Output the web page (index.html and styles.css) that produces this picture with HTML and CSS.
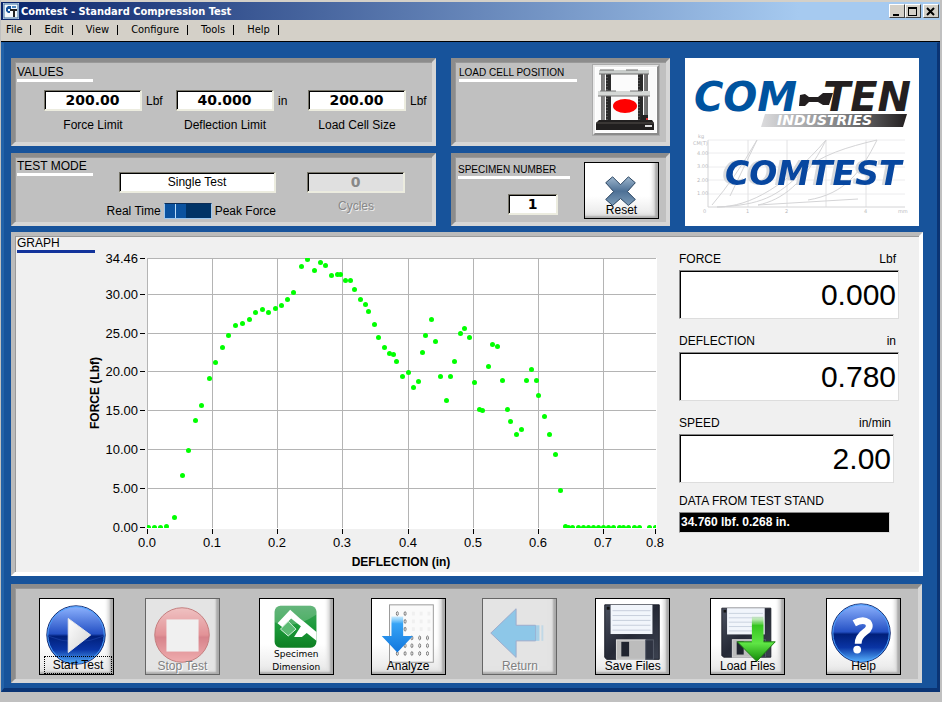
FILE: index.html
```html
<!DOCTYPE html>
<html lang="en">
<head>
  <meta charset="UTF-8">
  <meta name="viewport" content="width=device-width, initial-scale=1.0">
  <title>Comtest - Standard Compression Test</title>
  <link rel="stylesheet" href="styles.css">
</head>
<body>
  <header class="titlebar">
    <svg class="app-icon" width="16" height="16" viewBox="0 0 16 16" aria-hidden="true">
      <rect width="16" height="16" fill="#dfe9f3"/>
      <rect x="1" y="1" width="14" height="14" fill="#f4f8fb" stroke="#3b6ea0"/>
      <path d="M8 3H5L3 5v3l2 2h2V8H5V6h3z" fill="#17539b"/>
      <path d="M7 6h7v2h-2v6h-2V8H7z" fill="#222"/>
      <path d="M9 3h4v2H9z" fill="#4d86bd"/>
    </svg>
    <h1>Comtest - Standard Compression Test</h1>
    <div class="window-buttons">
      <button type="button" aria-label="Minimize"><svg width="12" height="11" viewBox="0 0 12 11"><path d="M2 8h6v2H2z"/></svg></button>
      <button type="button" aria-label="Maximize"><svg width="12" height="11" viewBox="0 0 12 11"><path fill-rule="evenodd" d="M1 1h9v9H1zM2 3v6h7V3z"/></svg></button>
      <button type="button" class="close" aria-label="Close"><svg width="12" height="11" viewBox="0 0 12 11"><path d="M2 2l7 7M9 2l-7 7" fill="none" stroke="#000" stroke-width="2"/></svg></button>
    </div>
  </header>

  <nav class="menubar">
    <a href="#">File</a>
    <a href="#">Edit</a>
    <a href="#">View</a>
    <a href="#">Configure</a>
    <a href="#">Tools</a>
    <a href="#">Help</a>
  </nav>

  <main>
    <div class="top">
      <section class="panel values">
        <h2>VALUES</h2>
        <div class="fields">
          <div class="field">
            <div class="entry"><input class="num" id="force" value="200.00"><span>Lbf</span></div>
            <label for="force">Force Limit</label>
          </div>
          <div class="field">
            <div class="entry"><input class="num" id="deflection" value="40.000"><span>in</span></div>
            <label for="deflection">Deflection Limit</label>
          </div>
          <div class="field">
            <div class="entry"><input class="num" id="cell" value="200.00"><span>Lbf</span></div>
            <label for="cell">Load Cell Size</label>
          </div>
        </div>
      </section>

      <section class="panel loadcell">
        <h2>LOAD CELL POSITION</h2>
        <button type="button" class="picture" aria-label="Load cell position">
          <svg width="60" height="64" viewBox="0 0 60 64">
            <defs>
              <linearGradient id="steel" x2="1" y2="0">
                <stop offset="0" stop-color="#777"/><stop offset=".5" stop-color="#e4e4e4"/><stop offset="1" stop-color="#666"/>
              </linearGradient>
            </defs>
            <rect width="60" height="64" fill="#fbfbfb"/>
            <path d="M10 4h5v52h-5zM42 4h5v52h-5z" fill="#2a2a2a"/>
            <path d="M11 6v48M43 6v48" stroke="#777" stroke-dasharray="1 2"/>
            <path d="M5 5h4v50H5zM48 5h4v50h-4z" fill="url(#steel)"/>
            <path d="M3 2h50v4H3z" fill="#c9cdcb"/>
            <path d="M3 6h50M4 2h14M30 2h12" stroke="#6d6d6d"/>
            <path d="M2 23h52v5H2z" fill="#d5d8d6"/>
            <path d="M2 28h52M4 23h16M34 23h12" stroke="#777"/>
            <path d="M3 52h53l2 3v7H0v-7z" fill="#211f1f"/>
            <path d="M0 55h58" stroke="#55504c"/>
            <path d="M45 47h7v6h-7z" fill="#222"/>
            <path d="M49 57h7v2h-7z" fill="#ddd"/>
            <path d="M50 50h2v2h-2z" fill="#d33"/>
            <ellipse cx="29" cy="38" rx="12" ry="7" fill="#f00"/>
          </svg>
        </button>
      </section>

      <div class="logo">
        <svg viewBox="0 0 234 166" role="img" aria-label="Com-Ten Industries Comtest">
          <defs>
            <linearGradient id="bar" x2="1" y2="0">
              <stop offset="0" stop-color="#dcdcde"/><stop offset=".6" stop-color="#77787a"/><stop offset="1" stop-color="#231f20"/>
            </linearGradient>
          </defs>
          <text class="brand blue" x="9" y="53">COM</text>
          <text class="brand" x="138" y="53">TEN</text>
          <path d="M115 37l5-1 4 3h9l5-4h10l-4 12h-6l-5-3h-9l-4 4h-6z" fill="#231f20"/>
          <path d="M80 56h142l-4 13H76z" fill="url(#bar)"/>
          <text class="industries" x="92" y="67">INDUSTRIES</text>
          <g fill="none" stroke="#d4d4d6">
            <path d="M23 82h197M23 95h197M23 109h197M23 122h197M23 136h197" stroke="#ececee"/>
            <path d="M63 82v67M102 82v67M141 82v67M181 82v67" stroke="#e2e2e4"/>
            <path d="M23 82v67h197"/>
            <path d="M27 147Q50 120 72 82L45 138M32 149c34 0 70-22 109-67-22 44-44 60-68 65M32 149c44-2 60-10 86-36 18-16 44-24 74-31-16 32-32 54-69 60M73 147l100-6"/>
          </g>
          <g class="ticks">
            <text x="13" y="80">kg</text><text x="8" y="87">CM(T)</text>
            <text x="12" y="97">4.00</text><text x="12" y="110">3.00</text><text x="12" y="124">2.00</text><text x="12" y="137">1.00</text>
            <text x="18" y="155">0</text><text x="61" y="155">1</text><text x="100" y="155">2</text><text x="179" y="155">4</text><text x="213" y="155">mm</text>
          </g>
          <text class="comtest" x="40" y="127">COMTEST</text>
        </svg>
      </div>

      <section class="panel mode">
        <h2>TEST MODE</h2>
        <div class="mode-choice">
          <select class="single" aria-label="Test mode"><option>Single Test</option></select>
          <div class="switch-row">
            <label for="peak">Real Time</label>
            <input type="checkbox" class="switch" id="peak">
            <label for="peak">Peak Force</label>
          </div>
        </div>
        <div class="cycles">
          <input class="num" id="cycles" value="0" disabled>
          <label for="cycles">Cycles</label>
        </div>
      </section>

      <section class="panel specimen">
        <div class="specimen-number">
          <h2><label for="specimen">SPECIMEN NUMBER</label></h2>
          <input class="num" id="specimen" value="1">
        </div>
        <button type="button" class="tool reset">
          <svg viewBox="0 0 74 56">
            <defs>
              <linearGradient id="cross" x2="0" y2="1">
                <stop offset="0" stop-color="#9db6cd"/><stop offset=".5" stop-color="#4d7095"/><stop offset="1" stop-color="#7d9cb8"/>
              </linearGradient>
            </defs>
            <path d="M28 14l8 8 8-8 7 6-8 9 8 8-7 6-8-7-8 7-7-6 8-8-8-9z" fill="url(#cross)" stroke="#29435f"/>
          </svg>
          <span>Reset</span>
        </button>
      </section>
    </div>

    <section class="panel graph">
      <h2>GRAPH</h2>
      <div class="graph-body">
        <svg class="chart" viewBox="0 0 580 322" role="img" aria-label="Force against deflection">
          <defs><clipPath id="plot"><rect x="62" y="8" width="509" height="270"/></clipPath></defs>
          <rect x="62" y="8" width="510" height="271" fill="#fff"/>
          <g id="grid"></g>
          <g id="dots" clip-path="url(#plot)"></g>
          <text class="axis" x="316" y="316">DEFLECTION (in)</text>
          <text class="axis" transform="translate(14 143) rotate(-90)">FORCE (Lbf)</text>
        </svg>

        <div class="readouts">
          <div class="readout">
            <div class="caption"><label for="out-force">FORCE</label><span>Lbf</span></div>
            <output id="out-force">0.000</output>
          </div>
          <div class="readout">
            <div class="caption"><label for="out-deflection">DEFLECTION</label><span>in</span></div>
            <output id="out-deflection">0.780</output>
          </div>
          <div class="readout speed">
            <div class="caption"><label for="out-speed">SPEED</label><span>in/min</span></div>
            <output id="out-speed">2.00</output>
          </div>
          <div class="readout raw">
            <div class="caption"><label for="out-raw">DATA FROM TEST STAND</label></div>
            <output id="out-raw">34.760 lbf. 0.268 in.</output>
          </div>
        </div>
      </div>
    </section>

    <section class="panel toolbar">
      <button type="button" class="tool start">
        <svg viewBox="0 0 75 77">
          <defs>
            <linearGradient id="ball" x2="0" y2="1">
              <stop offset="0" stop-color="#8fb4ff"/><stop offset=".48" stop-color="#2450c4"/><stop offset=".52" stop-color="#001f7a"/><stop offset=".75" stop-color="#0a35a5"/><stop offset="1" stop-color="#58b4ff"/>
            </linearGradient>
            <linearGradient id="white" x2="1" y2="1">
              <stop offset="0" stop-color="#fff"/><stop offset="1" stop-color="#d3d3d3"/>
            </linearGradient>
          </defs>
          <circle cx="37" cy="37" r="30" fill="url(#ball)" stroke="#12286e"/>
          <circle cx="37" cy="37" r="29" fill="none" stroke="#4ba3ff" stroke-width="1"/>
          <path d="M8 38q29 12 58 0" fill="none" stroke="#163a9c"/>
          <path d="M29 20l23 17-23 18z" fill="url(#white)" stroke="#e8e8e8"/>
        </svg>
        <span>Start Test</span>
      </button>
      <button type="button" class="tool" disabled>
        <svg viewBox="0 0 75 77">
          <defs>
            <linearGradient id="red" x2="0" y2="1">
              <stop offset="0" stop-color="#ff9a9a"/><stop offset=".5" stop-color="#e0303a"/><stop offset=".54" stop-color="#c80f20"/><stop offset="1" stop-color="#ff6d70"/>
            </linearGradient>
          </defs>
          <circle cx="37" cy="37" r="28" fill="url(#red)" stroke="#900"/>
          <rect x="21" y="21" width="33" height="33" fill="#fff"/>
        </svg>
        <span>Stop Test</span>
      </button>
      <button type="button" class="tool small">
        <svg viewBox="0 0 75 77">
          <defs>
            <linearGradient id="green" x2="0" y2="1">
              <stop offset="0" stop-color="#3fa45c"/><stop offset=".5" stop-color="#1c9a3a"/><stop offset="1" stop-color="#0d7f22"/>
            </linearGradient>
          </defs>
          <rect x="15" y="7" width="43" height="43" rx="6" fill="url(#green)"/>
          <path d="M15 24q20 8 43-8v-3q0-6-6-6H21q-6 0-6 6z" fill="#fff" opacity=".2"/>
          <path d="M18 25l13-14 10 9 5 4 12 10v9l-10-8-5 4h-8l7-11-10-8-9 9z" fill="#fff"/>
          <path d="M21 31l8-8 8 8-8 7z" fill="#5dbb74" stroke="#d9f2df"/>
        </svg>
        <span>Specimen<br>Dimension</span>
      </button>
      <button type="button" class="tool">
        <svg viewBox="0 0 75 77">
          <defs>
            <linearGradient id="sky" x2="0" y2="1">
              <stop offset="0" stop-color="#55c0ff" stop-opacity=".3"/><stop offset=".2" stop-color="#37a4f6"/><stop offset="1" stop-color="#1176dd"/>
            </linearGradient>
            <ellipse id="hole" rx="1" ry="2" fill="none" stroke="#777"/>
          </defs>
          <rect x="18" y="6" width="45" height="59" fill="#fafafa" stroke="#999"/>
          <use href="#hole" x="26" y="15"/><use href="#hole" x="34" y="15"/>
          <use href="#hole" x="34" y="23"/><use href="#hole" x="34" y="31"/>
          <use href="#hole" x="41" y="40"/><use href="#hole" x="49" y="40"/><use href="#hole" x="57" y="40"/>
          <use href="#hole" x="34" y="48"/><use href="#hole" x="41" y="48"/><use href="#hole" x="49" y="48"/><use href="#hole" x="57" y="48"/>
          <use href="#hole" x="26" y="56"/><use href="#hole" x="34" y="56"/><use href="#hole" x="41" y="56"/><use href="#hole" x="49" y="56"/><use href="#hole" x="57" y="56"/>
          <path d="M41 15h20M41 23h20M41 31h20" fill="none" stroke="#f0f0f0" stroke-width="4" stroke-dasharray="3 5"/>
          <path d="M20 18h12v20h10L26 55 10 38h10z" fill="url(#sky)"/>
        </svg>
        <span>Analyze</span>
      </button>
      <button type="button" class="tool" disabled>
        <svg viewBox="0 0 75 77">
          <path d="M8 35l26-25v17h20v16H34v17z" fill="#24a5ee" stroke="#4866ae"/>
          <path d="M54 27h4v16h-4z" fill="#24a5ee" opacity=".7"/>
          <path d="M60 27h2v16h-2z" fill="#24a5ee" opacity=".4"/>
        </svg>
        <span>Return</span>
      </button>
      <button type="button" class="tool">
        <svg viewBox="0 0 75 77">
          <defs>
            <linearGradient id="case" x2="1" y2="1">
              <stop offset="0" stop-color="#4b5160"/><stop offset=".5" stop-color="#252936"/><stop offset="1" stop-color="#3c4250"/>
            </linearGradient>
            <g id="floppy">
              <path d="M9 6h56v56H11l-2-2z" fill="url(#case)" stroke="#1b1e28"/>
              <rect x="15" y="6" width="43" height="30" fill="#f1f5fb"/>
              <path d="M17 12h39M17 17h39M17 22h39M17 27h39M17 32h39" stroke="#c5cedb"/>
              <rect x="21" y="42" width="30" height="20" fill="#bcbcbc" stroke="#ddd"/>
              <rect x="26" y="44" width="8" height="15" fill="#20242f"/>
              <rect x="51" y="42" width="8" height="20" fill="#2f3442" stroke="#555b69"/>
              <rect x="11" y="8" width="3" height="3" fill="#111"/>
            </g>
          </defs>
          <use href="#floppy"/>
        </svg>
        <span>Save Files</span>
      </button>
      <button type="button" class="tool">
        <svg viewBox="0 0 75 77">
          <defs>
            <linearGradient id="lime" x2="0" y2="1">
              <stop offset="0" stop-color="#a5e88b" stop-opacity=".3"/><stop offset=".2" stop-color="#35c51f"/><stop offset=".6" stop-color="#5fe545"/><stop offset="1" stop-color="#128a08"/>
            </linearGradient>
          </defs>
          <use href="#floppy" transform="translate(3 4) scale(.9)"/>
          <path d="M42 18h12v26h12L47 64 27 44h15z" fill="url(#lime)"/>
          <path d="M42 44H27l20 20 19-20H54" fill="none" stroke="#1c7a12"/>
        </svg>
        <span>Load Files</span>
      </button>
      <button type="button" class="tool">
        <svg viewBox="0 0 75 77">
          <circle cx="35" cy="35" r="30" fill="url(#ball)" stroke="#12286e"/>
          <circle cx="35" cy="35" r="29" fill="none" stroke="#4ba3ff"/>
          <path d="M28 25q9-5 14-1 4 5-3 10-7 5-7 12" fill="none" stroke="#fff" stroke-width="7"/>
          <circle cx="31" cy="52" r="4" fill="#fff"/>
        </svg>
        <span>Help</span>
      </button>
    </section>
  </main>
  <script src="chart.js"></script>
</body>
</html>
```
FILE: styles.css
```css
* {
  box-sizing: border-box;
}
body {
  margin: 0;
  min-height: 100vh;
  padding: 2px 2px 0 1px;
  background: #c0c0c0;
  font-family: "Liberation Sans Narrow", "Arial Narrow", "Liberation Sans", sans-serif;
  font-size: 12px;
  line-height: 16px;
  color: #000;
}
h1, h2 {
  margin: 0;
  font-weight: normal;
}
button, input, select {
  font: inherit;
  color: inherit;
  border-radius: 0;
  padding: 0;
  margin: 0;
}

/* title bar and menu */
.titlebar {
  display: flex;
  align-items: center;
  gap: 2px;
  height: 18px;
  padding: 0 1px 0 2px;
  background: linear-gradient(to right, #0a246a, #a6caf0 85%);
  box-shadow: 0 -2px #d4d0c8;
}
.titlebar h1 {
  flex: 1;
  color: #fff;
  font: bold 11px "DejaVu Sans Condensed", "DejaVu Sans", sans-serif;
}
.window-buttons {
  display: flex;
}
.window-buttons button {
  width: 16px;
  height: 14px;
  background: #d4d0c8;
  border: 1px solid;
  border-color: #fff #404040 #404040 #fff;
  line-height: 0;
}
.window-buttons .close {
  margin-left: 2px;
}
.menubar {
  display: flex;
  height: 22px;
  padding: 3px 5px;
  background: #d4d0c8;
  border-bottom: 1px solid #000;
  font: 11px/14px "DejaVu Sans Condensed", "DejaVu Sans", sans-serif;
}
.menubar a {
  display: flex;
  gap: 8px;
  margin-right: 13px;
  color: #000;
  text-decoration: none;
}
.menubar a::after {
  content: "";
  height: 10px;
  margin-top: 2px;
  border-right: 1px solid #000;
}

/* blue work area */
main {
  display: flex;
  flex-direction: column;
  padding: 15px 14px 5px 7px;
  background: #17539b;
  border: solid;
  border-width: 1px 3px 4px 3px;
  border-color: #17539b #0a3474 #0a3474 #2362a8;
}
.top {
  display: grid;
  grid-template-columns: 425fr 219fr 234fr;
  gap: 7px 15px;
  margin-right: 4px;
}
.panel {
  border: 4px solid;
  border-color: #8c8c8c #d6d6d6 #d6d6d6 #8c8c8c;
  box-shadow: inset 1px 1px #999;
  background: #c0c0c0;
}
.panel h2 {
  width: 76px;
  height: 17px;
  border-bottom: 3px solid #fff;
  font-size: 12px;
  line-height: 15px;
}

/* sunken entry boxes */
.num, .single {
  appearance: none;
  width: 98px;
  height: 21px;
  background: #fff;
  border: solid;
  border-width: 1px 2px 2px 1px;
  border-color: #77756a #ececdf #ececdf #77756a;
  box-shadow: inset 1px 1px #000;
  text-align: center;
}
.num {
  font: bold 14px "DejaVu Sans", sans-serif;
}
.values {
  min-height: 88px;
  padding: 3px 2px;
}
.fields {
  display: flex;
  gap: 34px;
  padding: 8px 0 0 27px;
}
.field {
  width: 98px;
  text-align: center;
}
.entry {
  display: flex;
  align-items: center;
  gap: 4px;
  margin-bottom: 6px;
}
.entry .num {
  flex: none;
}

.mode {
  display: grid;
  grid-template-columns: 102px 157px 98px;
  min-height: 73px;
  padding: 2px;
}
.mode-choice, .cycles {
  padding-top: 13px;
}
.cycles {
  width: 98px;
  margin-left: 31px;
  text-align: center;
  color: #888;
  text-shadow: 1px 1px #eee;
}
.cycles .num {
  background: #e0e0e0;
  color: #888;
  margin-bottom: 5px;
}
.single {
  display: block;
  width: 157px;
  text-align-last: center;
}
.switch-row {
  display: flex;
  align-items: center;
  justify-content: flex-end;
  gap: 3px;
  margin-top: 10px;
}
.switch {
  appearance: none;
  width: 48px;
  height: 16px;
  flex: none;
  border: 1px solid;
  border-color: #0b2c55 #9cc8f0 #9cc8f0 #9cc8f0;
  background: linear-gradient(to right, #0a529f 10px, #b9dcfa 10px 11px, #0a529f 11px 21px, #003366 21px);
}
.switch-row label {
  white-space: nowrap;
}

.loadcell, .specimen {
  display: flex;
  justify-content: space-between;
}
.loadcell {
  grid-column: 2;
  padding: 3px 7px 3px 4px;
}
.loadcell h2, .specimen h2 {
  font-size: 10px;
  white-space: nowrap;
}
.loadcell h2 {
  width: 118px;
}
.picture {
  width: 66px;
  height: 70px;
  background: #fff;
  border: 2px solid;
  border-color: #e8e8e8 #8a8a8a #8a8a8a #e8e8e8;
  outline: 1px solid #aaa;
  line-height: 0;
}
.specimen {
  padding: 5px 7px 3px 3px;
}
.specimen h2 {
  width: 112px;
}
.specimen-number .num {
  width: 50px;
  margin: 15px 0 0 50px;
}

.logo {
  grid-column: 3;
  grid-row: 1 / 3;
  background: #fff;
}
.logo svg {
  display: block;
  width: 100%;
}
.logo text {
  font-family: "DejaVu Sans", sans-serif;
}
.logo .brand {
  font-size: 40px;
  font-weight: bold;
  font-style: italic;
  fill: #231f20;
}
.logo .blue {
  fill: #00539f;
}
.logo .industries {
  font-size: 14px;
  font-weight: bold;
  font-style: italic;
  fill: #fff;
}
.logo .comtest {
  font-size: 33px;
  font-weight: bold;
  font-style: italic;
  fill: #0747a0;
  filter: drop-shadow(-3px 0 0 #d8dadd);
}
.logo .ticks text {
  font-size: 5px;
  fill: #b9b9bd;
}

/* graph */
.graph {
  margin-top: 6px;
  background: #f0f0f0;
  border-color: #bbb #fff #fff #bbb;
  padding: 0 2px;
}
.graph h2 {
  width: 78px;
  border-bottom-color: #12339b;
}
.graph-body {
  display: flex;
  align-items: flex-start;
  justify-content: space-between;
  margin-top: -3px;
  padding: 0 18px 0 68px;
}
.chart {
  flex: 1;
  min-width: 0;
  font: 13px "Liberation Sans", sans-serif;
}
.chart .axis {
  font-size: 12px;
  font-weight: bold;
  text-anchor: middle;
}
.readouts {
  flex: none;
  width: 220px;
  margin-left: 14px;
}
.readout {
  margin-bottom: 13px;
}
.caption {
  display: flex;
  justify-content: space-between;
  height: 20px;
  line-height: 18px;
  padding-right: 3px;
}
.readout output {
  display: block;
  height: 49px;
  padding-right: 2px;
  background: #fff;
  border: 1px solid;
  border-color: #888 #ddd #ddd #888;
  box-shadow: inset 1px 1px #000;
  text-align: right;
  font-size: 30px;
  line-height: 47px;
}
.speed {
  width: 215px;
  margin-bottom: 9px;
}
.raw {
  width: 211px;
  margin-bottom: 0;
}
.raw output {
  height: 21px;
  padding-left: 1px;
  background: #000;
  color: #fff;
  text-align: left;
  font: bold 12px/19px "Liberation Sans", sans-serif;
}

/* toolbar */
.toolbar {
  display: grid;
  grid-template-columns: 106fr 114fr 112fr 112fr 113fr 115fr 116fr 75px;
  align-items: center;
  margin: 8px 1px 0 0;
  padding: 10px 17px 4px 24px;
}
.tool {
  display: grid;
  width: 75px;
  height: 77px;
  background: linear-gradient(to bottom, #fff 60%, #e6e6e6);
  border: 1px solid #000;
  box-shadow: inset -3px -2px 2px #aaa, inset -6px -5px 3px #e2e2e2;
}
.tool svg, .tool span {
  grid-area: 1 / 1;
}
.tool svg {
  width: 100%;
}
.tool span {
  align-self: end;
  z-index: 1;
}
.start span {
  margin: 0 2px 1px 5px;
  outline: 1px dotted #000;
}
.small span {
  font: 9px/13px "DejaVu Sans", sans-serif;
}
.tool:disabled {
  background: #e4e4e4;
  border-color: #666;
  color: #808080;
  text-shadow: 1px 1px #fff;
}
.tool:disabled svg {
  opacity: .45;
}
.reset {
  height: 57px;
}
```
FILE: chart.js
```javascript
const SVG = "http://www.w3.org/2000/svg";

const xTicks = [[62, "0.0"], [127, "0.1"], [192, "0.2"], [257, "0.3"], [323, "0.4"], [388, "0.5"], [453, "0.6"], [518, "0.7"], [570, "0.8"]];
const yTicks = [[277, "0.00"], [238, "5.00"], [199, "10.00"], [160, "15.00"], [121, "20.00"], [83, "25.00"], [44, "30.00"], [8, "34.46"]];

const points = [
  [63, 277], [69, 277], [75, 277], [81, 276], [89, 267], [97, 225], [103, 200], [110, 170],
  [116, 155], [124, 128], [130, 112], [137, 97], [143, 85], [150, 75], [157, 73], [164, 69],
  [170, 62], [177, 59], [183, 62], [190, 58], [196, 55], [202, 49], [208, 42], [216, 16],
  [222, 9], [229, 20], [235, 12], [240, 15], [246, 25], [252, 24], [255, 24], [260, 30],
  [265, 30], [269, 39], [275, 49], [280, 54], [283, 61], [289, 74], [293, 87], [299, 97],
  [304, 103], [308, 104], [311, 111], [317, 126], [323, 122], [328, 137], [333, 131], [337, 102],
  [340, 85], [346, 69], [350, 91], [355, 126], [361, 150], [365, 126], [369, 111], [375, 83],
  [379, 78], [384, 87], [389, 132], [394, 159], [397, 160], [403, 116], [407, 94], [412, 96],
  [417, 130], [422, 159], [425, 171], [431, 184], [436, 179], [441, 130], [446, 119], [451, 130],
  [453, 145], [459, 166], [464, 184], [470, 204], [475, 240], [480, 276], [483, 277], [487, 277],
  [493, 277], [498, 277], [503, 277], [508, 277], [513, 277], [518, 277], [523, 277], [528, 277],
  [534, 277], [538, 277], [543, 277], [549, 277], [554, 277], [564, 277], [570, 277]
];

function add(parent, name, attrs, text) {
  const el = document.createElementNS(SVG, name);
  for (const key in attrs) {
    el.setAttribute(key, attrs[key]);
  }
  if (text) {
    el.textContent = text;
  }
  parent.appendChild(el);
}

const grid = document.getElementById("grid");
const dots = document.getElementById("dots");

xTicks.forEach(([x, label], i) => {
  if (i < xTicks.length - 1) {
    add(grid, "rect", { x: x, y: 8, width: 1, height: 270, fill: "#b4b4b4" });
  }
  add(grid, "rect", { x: x, y: 279, width: 1, height: 5 });
  add(grid, "text", { x: x, y: 297, "text-anchor": "middle" }, label);
});

yTicks.forEach(([y, label], i) => {
  if (i > 0) {
    add(grid, "rect", { x: 62, y: y, width: 509, height: 1, fill: "#b4b4b4" });
  }
  add(grid, "rect", { x: 55, y: y, width: 5, height: 1 });
  add(grid, "text", { x: 53, y: y + 5, "text-anchor": "end" }, label);
});

points.forEach(([x, y]) => {
  add(dots, "circle", { cx: x + 0.5, cy: y + 0.5, r: 2.5, fill: "#00ff00" });
});
```
